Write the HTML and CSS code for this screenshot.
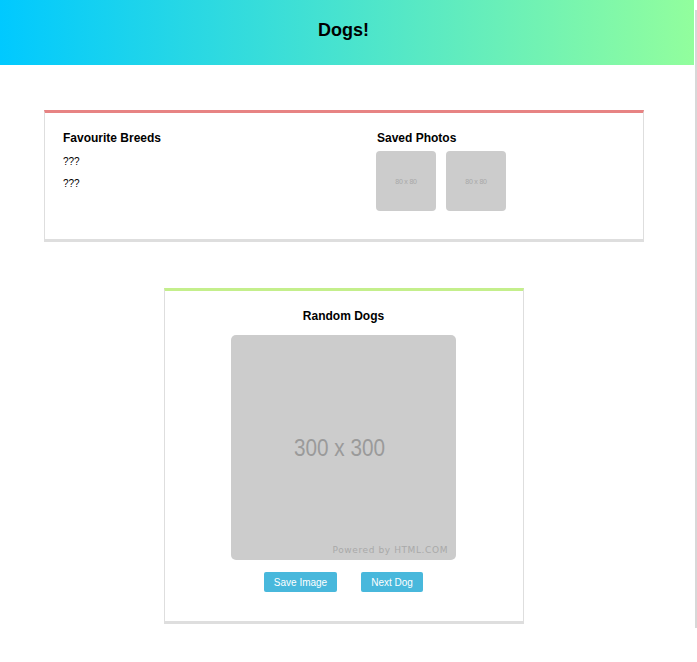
FILE: index.html
```html
<!DOCTYPE html>
<html>
<head>
<meta charset="utf-8">
<link rel="stylesheet" href="styles.css">
</head>
<body>
<div class="page">
  <main class="main">
    <header class="header"><h1 class="title">Dogs!</h1></header>
    <section class="card card-fav">
      <div class="col col-breeds">
        <h2 class="card-title">Favourite Breeds</h2>
        <p class="breed">???</p>
        <p class="breed">???</p>
      </div>
      <div class="col col-photos">
        <h2 class="card-title">Saved Photos</h2>
        <div class="thumbs">
          <div class="thumb"><span>80 x 80</span></div>
          <div class="thumb"><span>80 x 80</span></div>
        </div>
      </div>
    </section>
    <section class="card card-random">
      <h2 class="card-title center">Random Dogs</h2>
      <div class="photo">
        <span class="photo-size">300 x 300</span>
        <span class="photo-credit">Powered by HTML.COM</span>
      </div>
      <div class="buttons">
        <button class="btn btn-save">Save Image</button>
        <button class="btn btn-next">Next Dog</button>
      </div>
    </section>
  </main>
  <aside class="scrollbar"><div class="thumbbar"></div></aside>
</div>
</body>
</html>
```
FILE: styles.css
```css
* { box-sizing: border-box; }
html, body { margin: 0; padding: 0; background: #fff; }
body { font-family: "Liberation Sans", Arial, sans-serif; color: #000; }
.page { display: flex; width: 697px; height: 662px; overflow: hidden; }
.main { width: 694px; flex: none; }
.scrollbar { width: 3px; flex: none; padding-top: 10px; background: #fff; }
.thumbbar { width: 2px; height: 618px; background: #d8d8d8; margin-left: 1px; }
.header {
  height: 65px;
  background: linear-gradient(to right, #00c9ff, #92fe9d);
  display: flex; align-items: center; justify-content: center;
  padding-right: 7px;
}
.title { margin: 0; font-size: 18px; font-weight: bold; line-height: 1; padding-bottom: 6px; }
.card {
  background: #fff;
  border: 1px solid #dedede;
  border-bottom: 3px solid #dedede;
}
.card-fav {
  margin: 45px 0 0 44px;
  width: 600px;
  height: 132px;
  border-top: 3px solid #e78383;
  display: flex;
  padding: 17px 18px 0;
}
.col-breeds { width: 314px; }
.card-title { margin: 0; font-size: 12px; font-weight: bold; line-height: 16px; }
.center { text-align: center; }
.breed { margin: 9px 0 0; font-size: 10px; line-height: 13px; }
.breed + .breed { margin-top: 9px; }
.thumbs { display: flex; gap: 10px; margin-top: 5px; margin-left: -1px; }
.thumb {
  width: 60px; height: 60px; border-radius: 4px; background: #cccccc;
  display: flex; align-items: center; justify-content: center;
}
.thumb span { font-size: 7px; color: #a8a8a8; letter-spacing: -0.2px; }
.card-random {
  margin: 46px 0 0 164px;
  width: 360px;
  height: 336px;
  border-top: 3px solid #c4ef8c;
  display: flex; flex-direction: column; align-items: center;
  padding: 17px 1px 0 0;
}
.photo {
  position: relative;
  width: 225px; height: 225px; margin-top: 11px;
  background: #cccccc; border-radius: 5px;
  display: flex; align-items: center; justify-content: center;
}
.photo-size { font-size: 23px; color: #9a9a9a; transform: scaleX(0.9); display: inline-block; margin: 2px 7px 0 0; }
.photo-credit {
  position: absolute; right: 8px; bottom: 5px;
  font-family: "DejaVu Sans", sans-serif; font-size: 9px; color: #a9a9a9; letter-spacing: 0.6px;
}
.buttons { display: flex; gap: 24px; margin-top: 12px; }
.btn {
  height: 20px; border: 0; border-radius: 2px; background: #48b8dc; color: #fff;
  font-family: "Liberation Sans", Arial, sans-serif; font-size: 10px; padding: 0;
  white-space: nowrap;
}
.btn-save { width: 73px; }
.btn-next { width: 62px; }
```
